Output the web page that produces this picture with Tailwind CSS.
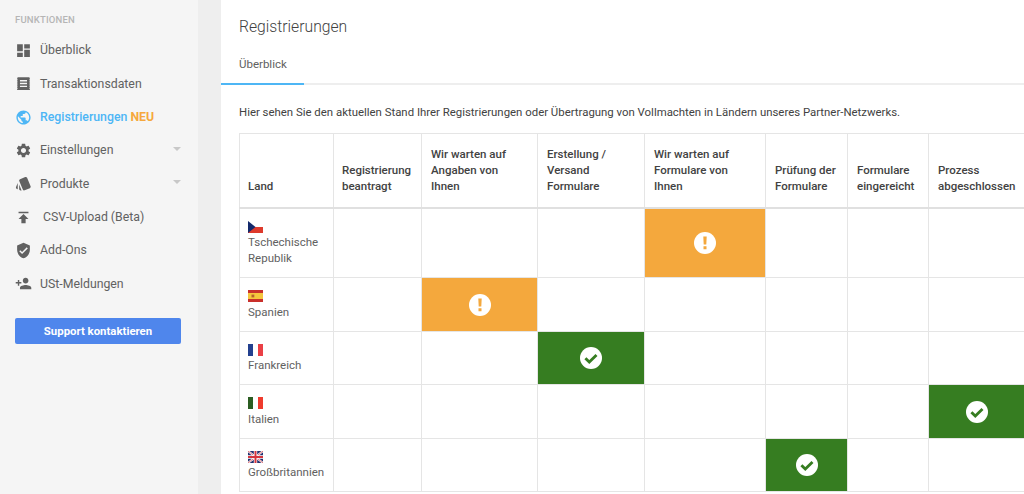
<!DOCTYPE html>
<html lang="de">

<head>
  <meta charset="UTF-8">
  <meta name="viewport" content="width=device-width, initial-scale=1.0">
  <title>Registrierungen</title>
  <script src="https://cdn.jsdelivr.net/npm/@tailwindcss/browser@4"></script>
</head>

<body class="bg-white font-['Roboto',sans-serif] overflow-hidden">

  <div class="flex h-[494px] w-[1024px] overflow-hidden">

    <!-- Sidebar -->
    <aside class="w-[198px] shrink-0 bg-[#f5f5f5] px-[15px] pt-[14px] text-[#616161]">
      <div class="text-[9.5px] leading-[12px] font-medium text-[#b5b5b5] tracking-[0.2px]">FUNKTIONEN</div>

      <nav class="mt-[8px] text-[12.3px]">
        <a class="flex items-center h-[33.3px] mt-[1px]">
          <svg class="w-[17px] h-[17px] fill-[#616161]" viewBox="0 0 24 24"><path d="M3 13h8V3H3v10zm0 8h8v-6H3v6zm10 0h8V11h-8v10zm0-18v6h8V3h-8z"/></svg>
          <span class="ml-2">Überblick</span>
        </a>
        <a class="flex items-center h-[33.3px]">
          <svg class="w-[17px] h-[17px]" viewBox="0 0 24 24"><path fill="#616161" d="M3 3h18v18H3V3zm4 4v2h10V7H7zm0 4v2h10v-2H7zm0 4v2h10v-2H7z"/><path stroke="#f5f5f5" stroke-width="1" stroke-dasharray="1.5 1.5" d="M3.2 3v18M20.8 3v18"/></svg>
          <span class="ml-2">Transaktionsdaten</span>
        </a>
        <a class="flex items-center h-[33.3px] text-[#4db6f5] font-medium">
          <svg class="w-[17px] h-[17px] fill-[#4db6f5]" viewBox="0 0 24 24"><path d="M12 2C6.48 2 2 6.48 2 12s4.48 10 10 10 10-4.48 10-10S17.52 2 12 2zm-1 17.93c-3.95-.49-7-3.85-7-7.93 0-.62.08-1.21.21-1.79L9 15v1c0 1.1.9 2 2 2v1.93zm6.9-2.54c-.26-.81-1-1.39-1.9-1.39h-1v-3c0-.55-.45-1-1-1H8v-2h2c.55 0 1-.45 1-1V7h2c1.1 0 2-.9 2-2v-.41c2.93 1.19 5 4.06 5 7.41 0 2.08-.8 3.97-2.1 5.39z"/></svg>
          <span class="ml-2">Registrierungen <span class="text-[#f5a83c] font-bold">NEU</span></span>
        </a>
        <a class="flex items-center h-[33.3px]">
          <svg class="w-[17px] h-[17px] fill-[#616161]" viewBox="0 0 24 24"><path d="M19.14 12.94c.04-.3.06-.61.06-.94 0-.32-.02-.64-.07-.94l2.03-1.58c.18-.14.23-.41.12-.61l-1.92-3.32c-.12-.22-.37-.29-.59-.22l-2.39.96c-.5-.38-1.03-.7-1.62-.94l-.36-2.54c-.04-.24-.24-.41-.48-.41h-3.84c-.24 0-.43.17-.47.41l-.36 2.54c-.59.24-1.13.57-1.62.94l-2.39-.96c-.22-.08-.47 0-.59.22L2.74 8.87c-.12.21-.08.47.12.61l2.03 1.58c-.05.3-.09.63-.09.94s.02.64.07.94l-2.03 1.58c-.18.14-.23.41-.12.61l1.92 3.32c.12.22.37.29.59.22l2.39-.96c.5.38 1.03.7 1.62.94l.36 2.54c.05.24.24.41.48.41h3.84c.24 0 .44-.17.47-.41l.36-2.54c.59-.24 1.13-.56 1.62-.94l2.39.96c.22.08.47 0 .59-.22l1.92-3.32c.12-.22.07-.47-.12-.61l-2.01-1.58zM12 15.6c-1.98 0-3.6-1.62-3.6-3.6s1.62-3.6 3.6-3.6 3.6 1.62 3.6 3.6-1.62 3.6-3.6 3.6z"/></svg>
          <span class="ml-2">Einstellungen</span>
          <span class="ml-auto mr-[2px] mb-[3px] w-0 h-0 border-x-[4px] border-x-transparent border-t-[4px] border-t-[#c8c8c8]"></span>
        </a>
        <a class="flex items-center h-[33.3px]">
          <svg class="w-[17px] h-[17px] fill-[#616161]" viewBox="0 0 24 24"><path d="M2.53 19.65l1.34.56v-9.03l-2.43 5.86c-.41 1.02.08 2.19 1.09 2.61zm19.5-3.7L17.07 3.98c-.31-.75-1.04-1.21-1.81-1.23-.26 0-.53.04-.79.15L7.1 5.95c-.75.31-1.21 1.03-1.23 1.8-.01.27.04.54.15.8l4.96 11.97c.31.76 1.05 1.22 1.83 1.23.26 0 .52-.05.77-.15l7.36-3.05c1.02-.42 1.51-1.59 1.09-2.6zM5.88 19.75c0 1.1.9 2 2 2h1.45l-3.45-8.34v6.34z"/></svg>
          <span class="ml-2">Produkte</span>
          <span class="ml-auto mr-[2px] mb-[3px] w-0 h-0 border-x-[4px] border-x-transparent border-t-[4px] border-t-[#c8c8c8]"></span>
        </a>
        <a class="flex items-center h-[33.3px]">
          <svg class="w-[17px] h-[17px] fill-[#616161]" viewBox="0 0 24 24"><path d="M5 4v2h14V4H5zm0 10h4v6h6v-6h4l-7-7-7 7z"/></svg>
          <span class="ml-[11px]">CSV-Upload (Beta)</span>
        </a>
        <a class="flex items-center h-[33.3px]">
          <svg class="w-[17px] h-[17px] fill-[#616161]" viewBox="0 0 24 24"><path d="M12 1L3 5v6c0 5.55 3.84 10.74 9 12 5.16-1.26 9-6.45 9-12V5l-9-4zm-2 16l-4-4 1.41-1.41L10 14.17l6.59-6.59L18 9l-8 8z"/></svg>
          <span class="ml-2">Add-Ons</span>
        </a>
        <a class="flex items-center h-[33.3px]">
          <svg class="w-[17px] h-[17px] fill-[#616161]" viewBox="0 0 24 24"><path d="M15 12c2.21 0 4-1.79 4-4s-1.79-4-4-4-4 1.79-4 4 1.79 4 4 4zm-9-2V7H4v3H1v2h3v3h2v-3h3v-2H6zm9 4c-2.67 0-8 1.34-8 4v2h16v-2c0-2.66-5.33-4-8-4z"/></svg>
          <span class="ml-2">USt-Meldungen</span>
        </a>
      </nav>

      <button class="mt-[18px] w-[166px] h-[26px] rounded-[2px] bg-[#4f86ec] text-white text-[11.4px] font-bold">Support kontaktieren</button>
    </aside>

    <!-- Gutter -->
    <div class="w-[23px] shrink-0 bg-[#eeeeee]"></div>

    <!-- Main -->
    <main class="flex-1 min-w-0 overflow-hidden">
      <h1 class="pl-[18px] pt-[17px] text-[15.7px] leading-[20px] font-light text-[#424242]">Registrierungen</h1>

      <div class="mt-[11px] h-[37px] border-b-2 border-[#eeeeee] relative">
        <div class="w-[83px] h-[37px] pl-[18px] pt-[8px] text-[11.5px] leading-[16px] text-[#616161] border-b-2 border-[#4db6f5]">Überblick</div>
      </div>

      <p class="pl-[18px] mt-[19px] text-[11.4px] leading-[16px] text-[#424242] whitespace-nowrap">Hier sehen Sie den aktuellen Stand Ihrer Registrierungen oder Übertragung von Vollmachten in Ländern unseres Partner-Netzwerks.</p>

      <div class="ml-[18px] mt-[13px] w-[800px]">
        <table class="table-fixed border-collapse w-[785px] text-[11.5px] leading-[16px] text-[#616161]">
          <colgroup>
            <col class="w-[94px]"><col class="w-[88px]"><col class="w-[116px]"><col class="w-[107px]"><col class="w-[121px]"><col class="w-[82px]"><col class="w-[81px]"><col class="w-[96px]">
          </colgroup>
          <thead>
            <tr class="h-[74px] text-[#424242] align-bottom leading-[15.7px]">
              <th class="border border-[#e5e5e5] border-b-2 border-b-[#e0e0e0] px-[8px] pb-[12px] text-left font-medium">Land</th>
              <th class="border border-[#e5e5e5] border-b-2 border-b-[#e0e0e0] px-[8px] pb-[12px] text-left font-medium whitespace-nowrap">Registrierung<br>beantragt</th>
              <th class="border border-[#e5e5e5] border-b-2 border-b-[#e0e0e0] px-[9px] pb-[12px] text-left font-medium whitespace-nowrap">Wir warten auf<br>Angaben von<br>Ihnen</th>
              <th class="border border-[#e5e5e5] border-b-2 border-b-[#e0e0e0] px-[9px] pb-[12px] text-left font-medium whitespace-nowrap">Erstellung /<br>Versand<br>Formulare</th>
              <th class="border border-[#e5e5e5] border-b-2 border-b-[#e0e0e0] px-[9px] pb-[12px] text-left font-medium whitespace-nowrap">Wir warten auf<br>Formulare von<br>Ihnen</th>
              <th class="border border-[#e5e5e5] border-b-2 border-b-[#e0e0e0] px-[9px] pb-[12px] text-left font-medium whitespace-nowrap">Prüfung der<br>Formulare</th>
              <th class="border border-[#e5e5e5] border-b-2 border-b-[#e0e0e0] px-[9px] pb-[12px] text-left font-medium whitespace-nowrap">Formulare<br>eingereicht</th>
              <th class="border border-[#e5e5e5] border-b-2 border-b-[#e0e0e0] px-[9px] pb-[12px] text-left font-medium whitespace-nowrap">Prozess<br>abgeschlossen</th>
            </tr>
          </thead>
          <tbody>
            <tr class="h-[70px]">
              <td class="border border-[#e5e5e5] px-[8px] pt-[12px] align-top">
                <svg class="w-[15px] h-[12px] block mb-[1px]" viewBox="0 0 15 12"><rect width="15" height="6" fill="#fff"/><rect y="6" width="15" height="6" fill="#de3a2c"/><path d="M0 0l7.5 6L0 12z" fill="#13296b"/></svg>
                Tschechische Republik
              </td>
              <td class="border border-[#e5e5e5]"></td><td class="border border-[#e5e5e5]"></td><td class="border border-[#e5e5e5]"></td>
              <td class="border border-[#e5e5e5] bg-[#f4a83d] align-middle">
                <svg class="w-[22px] h-[22px] mx-auto" viewBox="0 0 22 22"><circle cx="11" cy="11" r="11" fill="#fff"/><path d="M9.3 4.6h3.4l-.4 8H9.7zM9.5 14.2h3v3h-3z" fill="#f4a83d"/></svg>
              </td>
              <td class="border border-[#e5e5e5]"></td><td class="border border-[#e5e5e5]"></td><td class="border border-[#e5e5e5]"></td>
            </tr>
            <tr class="h-[54px]">
              <td class="border border-[#e5e5e5] px-[8px] pt-[12px] align-top">
                <svg class="w-[15px] h-[12px] block mb-[2px]" viewBox="0 0 15 12"><rect width="15" height="12" fill="#c9302c"/><rect y="3" width="15" height="6" fill="#f5c53d"/><rect x="3.5" y="4.6" width="2.8" height="2.8" fill="#b5622d"/></svg>
                Spanien
              </td>
              <td class="border border-[#e5e5e5]"></td>
              <td class="border border-[#e5e5e5] bg-[#f4a83d] align-middle">
                <svg class="w-[22px] h-[22px] mx-auto" viewBox="0 0 22 22"><circle cx="11" cy="11" r="11" fill="#fff"/><path d="M9.3 4.6h3.4l-.4 8H9.7zM9.5 14.2h3v3h-3z" fill="#f4a83d"/></svg>
              </td>
              <td class="border border-[#e5e5e5]"></td><td class="border border-[#e5e5e5]"></td><td class="border border-[#e5e5e5]"></td><td class="border border-[#e5e5e5]"></td><td class="border border-[#e5e5e5]"></td>
            </tr>
            <tr class="h-[53px]">
              <td class="border border-[#e5e5e5] px-[8px] pt-[12px] align-top">
                <svg class="w-[15px] h-[12px] block mb-[1px]" viewBox="0 0 15 12"><rect width="5" height="12" fill="#23408f"/><rect x="5" width="5" height="12" fill="#fff"/><rect x="10" width="5" height="12" fill="#ea4045"/></svg>
                Frankreich
              </td>
              <td class="border border-[#e5e5e5]"></td><td class="border border-[#e5e5e5]"></td>
              <td class="border border-[#e5e5e5] bg-[#367d21] align-middle">
                <svg class="w-[22px] h-[22px] mx-auto" viewBox="0 0 22 22"><circle cx="11" cy="11" r="11" fill="#fff"/><path d="M5.4 11.2l3.9 3.9 7.2-7.2" fill="none" stroke="#367d21" stroke-width="2.8"/></svg>
              </td>
              <td class="border border-[#e5e5e5]"></td><td class="border border-[#e5e5e5]"></td><td class="border border-[#e5e5e5]"></td><td class="border border-[#e5e5e5]"></td><td class="border border-[#e5e5e5]"></td>
            </tr>
            <tr class="h-[54px]">
              <td class="border border-[#e5e5e5] px-[8px] pt-[12px] align-top">
                <svg class="w-[15px] h-[12px] block mb-[2px]" viewBox="0 0 15 12"><rect width="5" height="12" fill="#2b5d22"/><rect x="5" width="5" height="12" fill="#fff"/><rect x="10" width="5" height="12" fill="#ef3b2d"/></svg>
                Italien
              </td>
              <td class="border border-[#e5e5e5]"></td><td class="border border-[#e5e5e5]"></td><td class="border border-[#e5e5e5]"></td><td class="border border-[#e5e5e5]"></td><td class="border border-[#e5e5e5]"></td><td class="border border-[#e5e5e5]"></td>
              <td class="border border-[#e5e5e5] bg-[#367d21] align-middle">
                <svg class="w-[22px] h-[22px] mx-auto" viewBox="0 0 22 22"><circle cx="11" cy="11" r="11" fill="#fff"/><path d="M5.4 11.2l3.9 3.9 7.2-7.2" fill="none" stroke="#367d21" stroke-width="2.8"/></svg>
              </td>
            </tr>
            <tr class="h-[53px]">
              <td class="border border-[#e5e5e5] px-[8px] pt-[12px] align-top whitespace-nowrap">
                <svg class="w-[15px] h-[12px] block mb-[1px]" viewBox="0 0 15 12"><rect width="15" height="12" fill="#23306f"/><path d="M0 0l15 12M15 0L0 12" stroke="#fff" stroke-width="2"/><path d="M0 0l15 12M15 0L0 12" stroke="#d5343c" stroke-width=".7"/><path d="M7.5 0v12M0 6h15" stroke="#fff" stroke-width="3.4"/><path d="M7.5 0v12M0 6h15" stroke="#d5343c" stroke-width="2"/></svg>
                Großbritannien
              </td>
              <td class="border border-[#e5e5e5]"></td><td class="border border-[#e5e5e5]"></td><td class="border border-[#e5e5e5]"></td><td class="border border-[#e5e5e5]"></td>
              <td class="border border-[#e5e5e5] bg-[#367d21] align-middle">
                <svg class="w-[22px] h-[22px] mx-auto" viewBox="0 0 22 22"><circle cx="11" cy="11" r="11" fill="#fff"/><path d="M5.4 11.2l3.9 3.9 7.2-7.2" fill="none" stroke="#367d21" stroke-width="2.8"/></svg>
              </td>
              <td class="border border-[#e5e5e5]"></td><td class="border border-[#e5e5e5]"></td>
            </tr>
          </tbody>
        </table>
      </div>
    </main>
  </div>

</body>

</html>
